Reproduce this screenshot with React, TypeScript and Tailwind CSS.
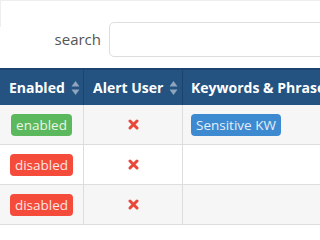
import React from "react"

const rows = [
    { enabled: true, keywords: ["Sensitive KW"] },
    { enabled: false, keywords: [] },
    { enabled: false, keywords: [] },
]

function SortIcon() {
    return (
        <svg width="9" height="16" viewBox="0 0 9 16" className="ml-1.5 shrink-0">
            <path d="M4.5 1 L8.5 6.5 H0.5 Z" fill="#8fa4bd" />
            <path d="M4.5 15 L8.5 9.5 H0.5 Z" fill="#8fa4bd" />
        </svg>
    )
}

function Cross() {
    return (
        <svg width="11" height="11" viewBox="0 0 11 11">
            <path d="M2 2 L9 9 M9 2 L2 9" stroke="#e8473a" strokeWidth="3" strokeLinecap="round" />
        </svg>
    )
}

export default function App() {
    return (
        <div className="w-[320px] h-[240px] overflow-hidden bg-white font-['Open_Sans',sans-serif]">
            <div className="h-[27px] border-t border-l border-[#eeeeee]" />
            <div className="flex items-center justify-end -mt-[5px] h-[35px]">
                <span className="text-[15px] text-[#555555] mr-2">search</span>
                <div className="h-[35px] w-[220px] -mr-[9px] rounded-[5px] border border-[#dddddd] bg-white" />
            </div>
            <div className="h-[11px]" />
            <div className="w-[340px]">
                <div className="flex h-[37px] bg-[#245381] text-white text-[14px] font-bold border-t-2 border-[#1d4470]">
                    <div className="w-[84px] shrink-0 pl-[9px] flex items-center whitespace-nowrap border-r border-[#1c436b]">Enabled<SortIcon /></div>
                    <div className="w-[99px] shrink-0 pl-[9px] flex items-center whitespace-nowrap border-r border-[#1c436b]">Alert User<SortIcon /></div>
                    <div className="flex-1 pl-[8px] flex items-center whitespace-nowrap overflow-hidden">Keywords &amp; Phrases</div>
                </div>
                {rows.map((r, i) => (
                    <div key={i} className={`flex h-[40px] border-b border-[#dddddd] ${i % 2 === 0 ? "bg-[#f6f6f6]" : "bg-white"}`}>
                        <div className="w-[84px] shrink-0 flex items-center justify-center border-r border-[#dddddd]">
                            {r.enabled ? (
                                <span className="rounded-[4px] bg-[#5cb85c] px-[5px] py-[2px] text-[13.5px] leading-[18px] text-[#e8f6e8]">enabled</span>
                            ) : (
                                <span className="rounded-[4px] bg-[#f44b3a] px-[5px] py-[2px] text-[13.5px] leading-[18px] text-[#fde5e2]">disabled</span>
                            )}
                        </div>
                        <div className="w-[99px] shrink-0 flex items-center justify-center border-r border-[#dddddd]">
                            <Cross />
                        </div>
                        <div className="flex-1 flex items-center pl-[8px]">
                            {r.keywords.map((k) => (
                                <span key={k} className="rounded-[4px] bg-[#3e8ad0] px-[5px] py-[2px] text-[13.5px] leading-[18px] text-[#e3eefa]">{k}</span>
                            ))}
                        </div>
                    </div>
                ))}
            </div>
        </div>
    )
}
